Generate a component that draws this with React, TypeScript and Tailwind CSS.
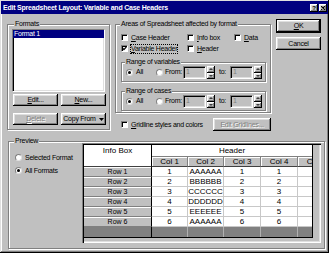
import React from "react";

const txt = "text-[7px] leading-[8px] tracking-[-0.25px] whitespace-nowrap";
const raised =
  "bg-[#c0c0c0] shadow-[inset_-1px_-1px_0_#000,inset_1px_1px_0_#fff,inset_-2px_-2px_0_#808080,inset_2px_2px_0_#dfdfdf]";
const sunken =
  "border border-t-[#808080] border-l-[#808080] border-b-white border-r-white shadow-[inset_1px_1px_0_#000,inset_-1px_-1px_0_#dfdfdf]";

function Group({
  label,
  className,
  labelClass,
  children,
}: {
  label: string;
  className: string;
  labelClass: string;
  children?: React.ReactNode;
}) {
  return (
    <div
      className={
        "relative border border-[#808080] shadow-[inset_1px_1px_0_#fff,1px_1px_0_#fff] " + className
      }
    >
      <span className={"absolute top-[-5px] bg-[#c0c0c0] px-[1px] " + txt + " " + labelClass}>{label}</span>
      {children}
    </div>
  );
}

function Btn({
  children,
  className = "",
  disabled = false,
}: {
  children: React.ReactNode;
  className?: string;
  disabled?: boolean;
}) {
  return (
    <div
      className={
        "flex items-center justify-center " +
        raised +
        " " +
        txt +
        " " +
        (disabled ? "text-[#808080] [text-shadow:1px_1px_0_#fff]" : "text-black") +
        " " +
        className
      }
    >
      {children}
    </div>
  );
}

function Check({ checked = false }: { checked?: boolean }) {
  return (
    <span
      className={
        "relative inline-block w-[7px] h-[7px] shrink-0 bg-white border border-t-[#808080] border-l-[#808080] border-b-white border-r-white shadow-[inset_1px_1px_0_#000]"
      }
    >
      {checked && (
        <svg className="absolute left-[0px] top-[0px]" width="5" height="5" viewBox="0 0 5 5">
          <path d="M0.6 2.2 L1.9 3.6 L4.4 0.8" stroke="#000" strokeWidth="1.2" fill="none" />
        </svg>
      )}
    </span>
  );
}

function Radio({ on = false }: { on?: boolean }) {
  return (
    <span className="inline-flex w-[7px] h-[7px] shrink-0 items-center justify-center rounded-full bg-white border border-t-[#808080] border-l-[#808080] border-b-[#dfdfdf] border-r-[#dfdfdf]">
      {on && <span className="w-[3px] h-[3px] rounded-full bg-black" />}
    </span>
  );
}

function Spin() {
  return (
    <div className="flex flex-col w-[8px] h-[13px] shrink-0">
      <div className={raised + " h-[7px] flex items-center justify-center"}>
        <svg width="4" height="2" viewBox="0 0 4 2">
          <path d="M0 2 L2 0 L4 2Z" fill="#404040" />
        </svg>
      </div>
      <div className={raised + " h-[6px] flex items-center justify-center"}>
        <svg width="4" height="2" viewBox="0 0 4 2">
          <path d="M0 0 L2 2 L4 0Z" fill="#404040" />
        </svg>
      </div>
    </div>
  );
}

function Field() {
  return (
    <div className={"w-[23px] h-[13px] shrink-0 bg-[#c0c0c0] flex items-center pl-[2px] " + sunken}>
      <span className={txt + " text-[#808080]"}>1</span>
    </div>
  );
}

function RangeGroup({ label }: { label: string }) {
  return (
    <Group label={label} labelClass="left-[3px]" className="w-[145px] h-[20px]">
      <div className="flex items-center h-full pl-[4px]">
        <div className="w-[30px] flex items-center gap-[3px] shrink-0">
          <Radio on />
          <span className={txt}>All</span>
        </div>
        <div className="w-[27px] flex items-center gap-[2px] shrink-0">
          <Radio />
          <span className={txt}>From:</span>
        </div>
        <Field />
        <div className="ml-[1px]">
          <Spin />
        </div>
        <span className={txt + " ml-[4px] w-[11px] shrink-0"}>to:</span>
        <Field />
        <div className="ml-[1px]">
          <Spin />
        </div>
      </div>
    </Group>
  );
}

const colW = ["w-[36px]", "w-[36px]", "w-[37px]", "w-[37px]", "w-[37px]"];
const rows = [
  ["1", "AAAAAA", "1", "1", ""],
  ["2", "BBBBBB", "2", "2", ""],
  ["3", "CCCCCC", "3", "3", ""],
  ["4", "DDDDDD", "4", "4", ""],
  ["5", "EEEEEE", "5", "5", ""],
  ["6", "AAAAAA", "6", "6", ""],
];

function PreviewTable() {
  return (
    <div className="w-[229px] h-[93px] overflow-hidden border-r border-b border-black bg-[#c0c0c0] flex flex-col font-['Liberation_Sans',Arial,sans-serif]">
      <div className="flex h-[22px] shrink-0">
        <div className="w-[68px] shrink-0 bg-white border-r border-r-black border-b border-b-[#404040] text-center text-[8px] leading-[10px] pt-[1px] whitespace-nowrap">
          Info Box
        </div>
        <div className="flex flex-col shrink-0">
          <div className="h-[12px] w-[200px] bg-white border-b border-b-[#808080] text-[8px] leading-[11px] whitespace-nowrap">
            <div className="w-[160px] text-center">Header</div>
          </div>
          <div className="flex h-[10px]">
            {colW.map((w, i) => (
              <div
                key={i}
                className={
                  w +
                  " shrink-0 h-[10px] bg-[#c0c0c0] border-r border-r-[#808080] border-b border-b-[#404040] shadow-[inset_1px_1px_0_#fff] text-center text-[8px] leading-[9px] whitespace-nowrap"
                }
              >
                {"Col " + (i + 1)}
              </div>
            ))}
          </div>
        </div>
      </div>
      {rows.map((r, ri) => (
        <div key={ri} className="flex h-[10px] shrink-0">
          <div className="w-[68px] shrink-0 h-[10px] bg-[#c0c0c0] border-r border-r-black border-b border-b-[#808080] shadow-[inset_0_1px_0_#fff] text-center text-[7px] leading-[9px] whitespace-nowrap">
            {"Row " + (ri + 1)}
          </div>
          {r.map((v, ci) => (
            <div
              key={ci}
              className={
                colW[ci] +
                " shrink-0 h-[10px] bg-white border-r border-b border-[#c8c8c8] text-center text-[8px] leading-[9px] whitespace-nowrap"
              }
            >
              {v}
            </div>
          ))}
        </div>
      ))}
      <div className="flex h-[10px] shrink-0">
        <div className="w-[68px] shrink-0 h-[10px] bg-[#808080] border-r border-r-black" />
        {colW.map((w, i) => (
          <div key={i} className={w + " shrink-0 h-[10px] bg-[#808080] border-r border-r-[#b0b0b0]"} />
        ))}
      </div>
    </div>
  );
}

export default function App() {
  return (
    <div className="w-[329px] h-[253px] overflow-hidden bg-[#c0c0c0] text-black font-['Liberation_Sans',Arial,sans-serif] shadow-[inset_-1px_-1px_0_#000,inset_1px_1px_0_#dfdfdf,inset_-2px_-2px_0_#808080,inset_2px_2px_0_#fff] flex flex-col">
      {/* Title bar */}
      <div className="ml-[1px] mt-[1px] w-[327px] h-[13px] shrink-0 bg-[#000080] flex items-center pl-[2px] pr-[1px]">
        <span className="text-white font-bold text-[7px] leading-[8px] tracking-[-0.22px] whitespace-nowrap">
          Edit Spreadsheet Layout: Variable and Case Headers
        </span>
        <div className="ml-auto flex gap-[1px]">
          <div className={raised + " w-[8px] h-[8px] flex items-center justify-center text-[6px] font-bold leading-none"}>?</div>
          <div className={raised + " w-[8px] h-[8px] flex items-center justify-center"}>
            <svg width="4" height="4" viewBox="0 0 4 4">
              <path d="M0 0 L4 4 M4 0 L0 4" stroke="#000" strokeWidth="1.1" />
            </svg>
          </div>
        </div>
      </div>

      {/* Top row */}
      <div className="flex items-start h-[118px] shrink-0">
        {/* Formats */}
        <Group label="Formats" labelClass="left-[6px]" className="ml-[7px] mt-[10px] w-[103px] h-[106px] shrink-0">
          <div className="pl-[4px] pt-[4px] flex flex-col">
            <div className={"w-[93px] h-[63px] bg-white " + sunken}>
              <div className={"h-[8px] bg-[#000080] text-white pl-[1px] " + txt}>Format 1</div>
            </div>
            <div className="mt-[2px] flex gap-[3px] pl-[1px]">
              <Btn className="w-[45px] h-[12px]">
                <span className="underline">E</span>dit...
              </Btn>
              <Btn className="w-[45px] h-[12px]">
                <span className="underline">N</span>ew...
              </Btn>
            </div>
            <div className="mt-[7px] flex gap-[3px] pl-[1px]">
              <Btn className="w-[45px] h-[12px]" disabled>
                <span className="underline">D</span>elete
              </Btn>
              <Btn className="w-[45px] h-[12px] gap-[3px]">
                <span>Copy From</span>
                <svg width="5" height="3" viewBox="0 0 5 3">
                  <path d="M0 0 L5 0 L2.5 3Z" fill="#000" />
                </svg>
              </Btn>
            </div>
          </div>
        </Group>

        {/* Middle */}
        <div className="ml-[5px] mt-[10px] w-[156px] flex flex-col shrink-0">
          <Group label="Areas of Spreadsheet affected by format" labelClass="left-[4px]" className="h-[89px]">
            <div className="pl-[5px] pt-[8px] flex flex-col">
              <div className="flex items-center h-[9px]">
                <div className="w-[66px] flex items-center gap-[3px] shrink-0">
                  <Check />
                  <span className={txt}>
                    <span className="underline">C</span>ase Header
                  </span>
                </div>
                <div className="w-[47px] flex items-center gap-[3px] shrink-0">
                  <Check />
                  <span className={txt}>
                    <span className="underline">I</span>nfo box
                  </span>
                </div>
                <div className="flex items-center gap-[3px]">
                  <Check />
                  <span className={txt}>
                    <span className="underline">D</span>ata
                  </span>
                </div>
              </div>
              <div className="flex items-center h-[9px] mt-[2px]">
                <div className="w-[66px] flex items-center gap-[3px] shrink-0">
                  <Check checked />
                  <span className={txt + " outline outline-1 outline-dotted outline-black"}>
                    <span className="underline">V</span>ariable Header
                  </span>
                </div>
                <div className="w-[47px] flex items-center gap-[3px] shrink-0">
                  <Check />
                  <span className={txt}>
                    <span className="underline">H</span>eader
                  </span>
                </div>
              </div>
              <div className="mt-[9px]">
                <RangeGroup label="Range of variables" />
              </div>
              <div className="mt-[9px]">
                <RangeGroup label="Range of cases" />
              </div>
            </div>
          </Group>
          <div className="mt-[5px] h-[13px] flex items-center pl-[6px]">
            <Check />
            <span className={txt + " ml-[3px]"}>
              <span className="underline">G</span>ridline styles and colors
            </span>
            <Btn className="ml-auto w-[58px] h-[13px]" disabled>
              Edit Gridlines...
            </Btn>
          </div>
        </div>

        {/* Right buttons */}
        <div className="ml-[5px] mt-[5px] w-[45px] flex flex-col shrink-0">
          <Btn className="h-[14px] border border-black">
            <span className="underline">O</span>K
          </Btn>
          <Btn className="h-[13px] mt-[4px]">Cancel</Btn>
        </div>
      </div>

      {/* Preview */}
      <Group label="Preview" labelClass="left-[5px]" className="ml-[8px] mt-[9px] w-[317px] h-[108px] shrink-0">
        <div className="flex h-full">
          <div className="w-[73px] shrink-0 pt-[11px] pl-[6px] flex flex-col">
            <div className="h-[9px] flex items-center gap-[3px]">
              <Radio />
              <span className={txt}>Selected Format</span>
            </div>
            <div className="h-[9px] mt-[4px] flex items-center gap-[3px]">
              <Radio on />
              <span className={txt}>All Formats</span>
            </div>
          </div>
          <div className="mt-[1px] w-[239px] h-[100px] p-[2px] shrink-0 bg-[#c0c0c0] shadow-[inset_1px_1px_0_#808080,inset_2px_2px_0_#000,inset_-1px_-1px_0_#fff,inset_-2px_-2px_0_#dfdfdf]">
            <PreviewTable />
          </div>
        </div>
      </Group>
    </div>
  );
}
